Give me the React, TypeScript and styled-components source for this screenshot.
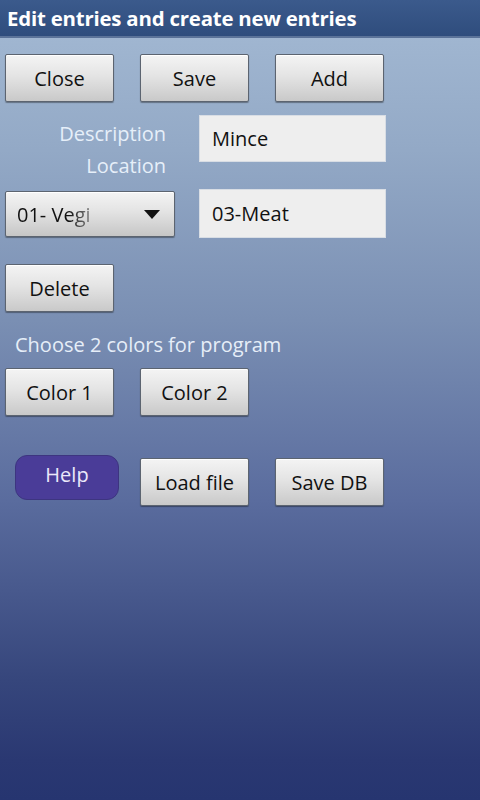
import React from "react";
import styled, { createGlobalStyle } from "styled-components";

const GlobalStyle = createGlobalStyle`
  html, body {
    margin: 0;
    padding: 0;
    height: 100%;
  }
  body {
    font-family: "Open Sans", "Noto Sans", "DejaVu Sans", sans-serif;
  }
`;

const Screen = styled.div`
  width: 480px;
  height: 800px;
  overflow: hidden;
  display: flex;
  flex-direction: column;
  background: linear-gradient(
    180deg,
    #a4bad4 0px,
    #93a9c6 150px,
    #7a8fb3 320px,
    #5a6c9e 500px,
    #36467c 680px,
    #2a3872 760px,
    #263570 800px
  );
`;

const TitleBar = styled.header`
  height: 36px;
  display: flex;
  align-items: center;
  padding-left: 7px;
  background: linear-gradient(180deg, #3b5a8c 0%, #2f4d7d 100%);
  border-bottom: 2px solid #5b7399;
  color: #ffffff;
  font-size: 20.4px;
  font-weight: 700;
  letter-spacing: -0.2px;
`;

const Body = styled.main`
  flex: 1;
  display: flex;
  flex-direction: column;
  padding-left: 5px;
`;

const ButtonRow = styled.div<{ $top: number }>`
  display: flex;
  align-items: center;
  gap: 26px;
  margin-top: ${(p) => p.$top}px;
`;

const Button = styled.button`
  box-sizing: border-box;
  width: 109px;
  height: 48px;
  padding: 0;
  font-family: inherit;
  font-size: 20px;
  color: #111;
  background: linear-gradient(180deg, #f4f4f4 0%, #e4e4e4 45%, #c9c9c9 100%);
  border: 1px solid #5c6470;
  border-radius: 2px;
  box-shadow: inset 0 1px 0 #ffffff, 0 1px 1px rgba(0, 0, 0, 0.35);
`;

const HelpButton = styled.button`
  box-sizing: border-box;
  width: 104px;
  height: 45px;
  margin-left: 10px;
  margin-right: -5px;
  align-self: flex-start;
  margin-top: -3px;
  padding: 0 0 6px;
  font-family: inherit;
  font-size: 20px;
  color: #ebe8fa;
  background: #4a3c98;
  border: 1px solid #3d3580;
  border-radius: 12px;
`;

const FormGrid = styled.div`
  display: grid;
  grid-template-columns: 170px 187px;
  column-gap: 24px;
  row-gap: 7px;
  margin-top: 13px;
`;

const LabelStack = styled.div`
  display: flex;
  flex-direction: column;
  align-items: flex-end;
  padding-top: 3px;
  padding-right: 9px;
`;

const FieldLabel = styled.span`
  font-size: 20px;
  line-height: 32px;
  color: #e6eff9;
`;

const TextField = styled.input<{ $h: number }>`
  box-sizing: border-box;
  width: 187px;
  height: ${(p) => p.$h}px;
  padding: 0 12px;
  font-family: inherit;
  font-size: 20px;
  color: #111;
  background: #eeeeee;
  border: 1px solid #d8dde4;
  outline: none;
`;

const Spinner = styled.div`
  box-sizing: border-box;
  height: 46px;
  margin-top: 2px;
  display: flex;
  align-items: center;
  justify-content: space-between;
  padding: 0 14px 0 11px;
  font-size: 20px;
  color: #111;
  background: linear-gradient(180deg, #f4f4f4 0%, #e3e3e3 45%, #c6c6c6 100%);
  border: 1px solid #5c6470;
  border-radius: 2px;
  box-shadow: inset 0 1px 0 #ffffff, 0 1px 1px rgba(0, 0, 0, 0.35);
`;

const SpinnerText = styled.span`
  background: linear-gradient(90deg, #111 70%, #888 100%);
  -webkit-background-clip: text;
  background-clip: text;
  color: transparent;
`;

const Hint = styled.p`
  margin: 20px 0 0 10px;
  font-size: 20px;
  line-height: 26px;
  color: #e6eef8;
`;

function Arrow() {
  return (
    <svg width="16" height="9" viewBox="0 0 16 9">
      <path d="M0 0 L16 0 L8 9 Z" fill="#111" />
    </svg>
  );
}

export default function App() {
  return (
    <>
      <GlobalStyle />
      <Screen>
        <TitleBar>Edit entries and create new entries</TitleBar>
        <Body>
          <ButtonRow $top={16}>
            <Button>Close</Button>
            <Button>Save</Button>
            <Button>Add</Button>
          </ButtonRow>

          <FormGrid>
            <LabelStack>
              <FieldLabel>Description</FieldLabel>
              <FieldLabel>Location</FieldLabel>
            </LabelStack>
            <TextField $h={47} defaultValue="Mince" />
            <Spinner>
              <SpinnerText>01- Vegi</SpinnerText>
              <Arrow />
            </Spinner>
            <TextField $h={49} defaultValue="03-Meat" />
          </FormGrid>

          <ButtonRow $top={26}>
            <Button>Delete</Button>
          </ButtonRow>

          <Hint>Choose 2 colors for program</Hint>

          <ButtonRow $top={10}>
            <Button>Color 1</Button>
            <Button>Color 2</Button>
          </ButtonRow>

          <ButtonRow $top={42}>
            <HelpButton>Help</HelpButton>
            <Button>Load file</Button>
            <Button>Save DB</Button>
          </ButtonRow>
        </Body>
      </Screen>
    </>
  );
}
